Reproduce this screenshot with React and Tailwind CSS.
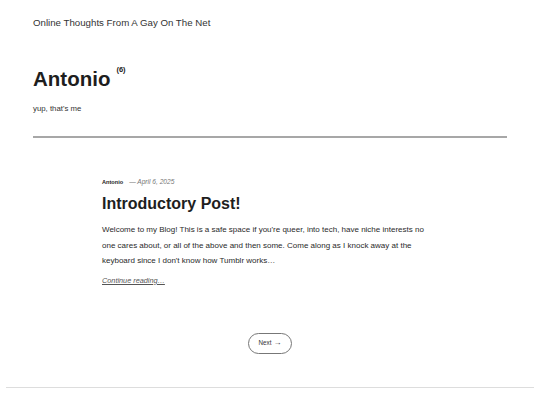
export default function App() {
  return (
    <div className="min-h-[405px] bg-white text-[#222] font-['Liberation_Sans',Arial,sans-serif]">
      <header className="px-[33px] pt-[17px]">
        <p className="text-[9.7px] leading-[12px] text-[#333]">Online Thoughts From A Gay On The Net</p>
        <div className="mt-[38px] flex items-start">
          <h1 className="text-[20.5px] leading-[24px] font-bold text-[#1e1e1e]">Antonio</h1>
          <sup className="ml-[6px] mt-[-2px] text-[7.5px] leading-[10px] font-semibold top-0 text-[#222]">(6)</sup>
        </div>
        <p className="mt-[13px] text-[7.8px] leading-[10px] text-[#333]">yup, that's me</p>
        <hr className="mt-[22px] border-0 h-[2px] bg-[#a7a7a7]" />
      </header>

      <main className="mx-auto w-[336px] pt-[40px]">
        <div className="flex items-center gap-[6px] leading-[8px]">
          <span className="text-[5.6px] font-bold text-[#222]">Antonio</span>
          <span className="text-[6.6px] italic text-[#777]">— April 6, 2025</span>
        </div>
        <h2 className="mt-[8px] text-[16px] leading-[20px] font-bold text-[#1e1e1e]">Introductory Post!</h2>
        <p className="mt-[8px] text-[8px] leading-[15.5px] text-[#2a2a2a]">
          Welcome to my Blog! This is a safe space if you're queer, into tech, have niche interests no one cares about, or all of the above and then some. Come along as I knock away at the keyboard since I don't know how Tumblr works…
        </p>
        <a href="#" className="mt-[7px] block w-fit text-[7.3px] leading-[10px] italic underline text-[#555]">Continue reading…</a>

        <div className="mt-[47px] flex justify-center">
          <button className="flex h-[21px] w-[44px] items-center justify-center gap-[2px] rounded-full border border-[#777] text-[#333]">
            <span className="text-[6.3px]">Next</span>
            <span className="text-[8px] leading-none">→</span>
          </button>
        </div>
      </main>

      <div className="mx-[6px] mt-[33px] h-px bg-[#ddd]" />
    </div>
  );
}
